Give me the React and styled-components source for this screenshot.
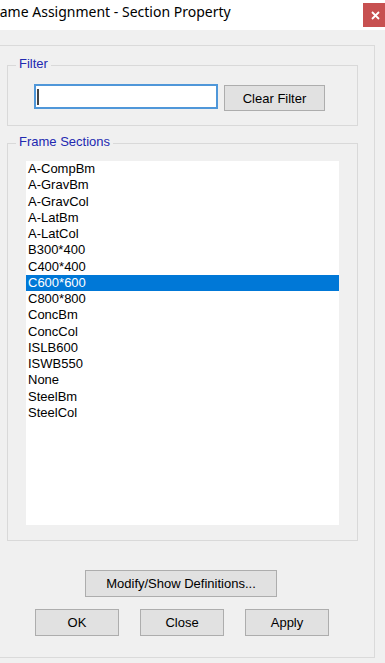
import React from 'react';
import styled, { createGlobalStyle } from 'styled-components';

const GlobalStyle = createGlobalStyle`
  html, body {
    margin: 0;
    padding: 0;
    background: #f0f0f0;
    overflow: hidden;
  }
  body {
    font-family: "Liberation Sans", Arial, sans-serif;
  }
`;

const sections = [
  'A-CompBm',
  'A-GravBm',
  'A-GravCol',
  'A-LatBm',
  'A-LatCol',
  'B300*400',
  'C400*400',
  'C600*600',
  'C800*800',
  'ConcBm',
  'ConcCol',
  'ISLB600',
  'ISWB550',
  'None',
  'SteelBm',
  'SteelCol',
];

// the dialog sits partly off-screen, so it is wider than the viewport
const Window = styled.div`
  width: 410px;
  height: 663px;
  margin-left: -20px;
  display: flex;
  flex-direction: column;
  background: #f0f0f0;
  overflow: hidden;
`;

const TitleBar = styled.div`
  height: 30px;
  flex: none;
  background: #ffffff;
  display: flex;
  align-items: flex-start;
  justify-content: space-between;
`;

const Title = styled.div`
  font-family: "Noto Sans", "Open Sans", sans-serif;
  font-size: 14px;
  line-height: 24px;
  color: #000;
  padding-left: 7px;
  white-space: nowrap;
`;

const CloseButton = styled.div`
  width: 25px;
  height: 24px;
  margin-top: 3px;
  margin-right: 2px;
  background: #c75050;
  display: flex;
  align-items: center;
  justify-content: center;
`;

const Panel = styled.div`
  flex: 1;
  margin: 15px 15px 5px 16px;
  padding: 19px 16px 0 10px;
  border: 1px solid #dadada;
  display: flex;
  flex-direction: column;
`;

const GroupBox = styled.div`
  position: relative;
  border: 1px solid #d9d9d9;
  padding: ${p => p.$pad};
  margin-bottom: ${p => p.$gap || 0}px;
`;

const Caption = styled.span`
  position: absolute;
  top: -10px;
  left: 8px;
  padding: 0 3px;
  background: #f0f0f0;
  font-size: 13px;
  line-height: 15px;
  color: #2229b0;
`;

const FilterRow = styled.div`
  display: flex;
  align-items: flex-start;
  gap: 6px;
`;

const TextBox = styled.div`
  width: 179px;
  height: 21px;
  border: 2px solid #4f97d9;
  background: #fff;
  display: flex;
  align-items: center;
  padding-left: 1px;
`;

const Caret = styled.span`
  width: 2px;
  height: 16px;
  background: #444;
`;

const Button = styled.button`
  width: ${p => p.$w}px;
  height: ${p => p.$h || 27}px;
  margin-top: ${p => p.$mt || 0}px;
  padding: 0;
  background: #e1e1e1;
  border: 1px solid #adadad;
  font-family: "Liberation Sans", Arial, sans-serif;
  font-size: 13px;
  color: #000;
  flex: none;
`;

const ListBox = styled.div`
  width: 313px;
  height: 364px;
  background: #fff;
  overflow: hidden;
`;

const Item = styled.div`
  height: 16.25px;
  line-height: 16.25px;
  padding-left: 2px;
  font-size: 13px;
  white-space: nowrap;
  color: ${p => (p.$selected ? '#fff' : '#000')};
  background: ${p => (p.$selected ? '#0078d7' : 'transparent')};
`;

const Footer = styled.div`
  display: flex;
  flex-direction: column;
  padding-top: 29px;
  gap: 12px;
`;

const DefsRow = styled.div`
  padding-left: 78px;
`;

const ButtonRow = styled.div`
  display: flex;
  gap: 21px;
  padding-left: 28px;
`;

export default function App() {
  return (
    <>
      <GlobalStyle />
      <Window>
        <TitleBar>
          <Title>Frame Assignment - Section Property</Title>
          <CloseButton>
            <svg width="9" height="9" viewBox="0 0 9 9">
              <path d="M1 1 L8 8 M8 1 L1 8" stroke="#fff" strokeWidth="1.8" />
            </svg>
          </CloseButton>
        </TitleBar>
        <Panel>
          <GroupBox $pad="18px 0 14px 26px" $gap={17}>
            <Caption>Filter</Caption>
            <FilterRow>
              <TextBox>
                <Caret />
              </TextBox>
              <Button $w={101} $h={26} $mt={1}>Clear Filter</Button>
            </FilterRow>
          </GroupBox>
          <GroupBox $pad="17px 0 15px 18px">
            <Caption>Frame Sections</Caption>
            <ListBox>
              {sections.map(s => (
                <Item key={s} $selected={s === 'C600*600'}>{s}</Item>
              ))}
            </ListBox>
          </GroupBox>
          <Footer>
            <DefsRow>
              <Button $w={192}>Modify/Show Definitions...</Button>
            </DefsRow>
            <ButtonRow>
              <Button $w={84}>OK</Button>
              <Button $w={84}>Close</Button>
              <Button $w={84}>Apply</Button>
            </ButtonRow>
          </Footer>
        </Panel>
      </Window>
    </>
  );
}
